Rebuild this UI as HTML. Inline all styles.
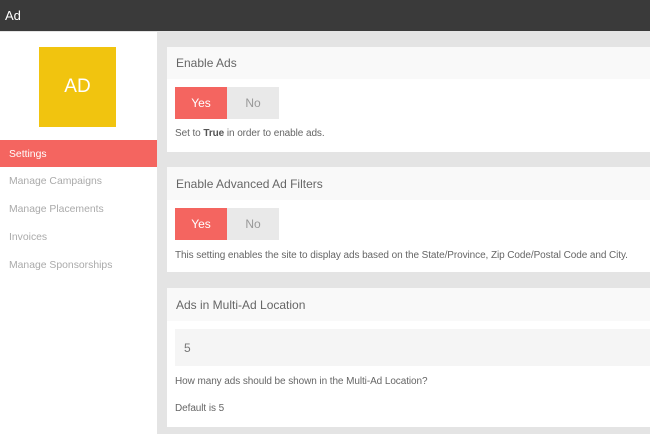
<!DOCTYPE html>
<html><head><style>
*{margin:0;padding:0;box-sizing:border-box}
body{width:650px;height:434px;overflow:hidden;background:#e4e4e4;font-family:"Liberation Sans",Arial,sans-serif;position:relative}
.top{position:absolute;left:0;top:0;width:650px;height:31px;background:#3a3a3a;color:#fff;font-size:13px;line-height:31px;padding-left:5px}
.side{position:absolute;left:0;top:32px;width:157px;height:402px;background:#fff}
.logo{position:absolute;left:39px;top:15px;width:77px;height:80px;background:#f1c40f;color:#fff;font-size:19px;text-align:center;line-height:80px}
.nav{position:absolute;left:0;width:157px;height:27px;line-height:29px;padding-left:9px;font-size:10.4px;color:#aaa}
.nav.act{background:#f46560;color:#fff}
.card{position:absolute;left:167px;width:483px;background:#fff}
.hd{height:32px;background:#f9f9f9;color:#666;font-size:12px;line-height:33px;padding-left:9px}
.btn{position:absolute;top:40px;width:52px;height:32px;line-height:33px;text-align:center;font-size:12px}
.y{left:8px;background:#f46560;color:#fff}
.n{left:60px;background:#e9e9e9;color:#999}
.t{position:absolute;left:8px;font-size:10px;color:#666;letter-spacing:-0.08px}
</style></head><body>
<div class="top">Ad</div>
<div class="side">
<div class="logo">AD</div>
<div class="nav act" style="top:108px">Settings</div>
<div class="nav" style="top:135px">Manage Campaigns</div>
<div class="nav" style="top:163px">Manage Placements</div>
<div class="nav" style="top:191px">Invoices</div>
<div class="nav" style="top:219px">Manage Sponsorships</div>
</div>
<div class="card" style="top:47px;height:105px">
<div class="hd">Enable Ads</div>
<div class="btn y">Yes</div><div class="btn n">No</div>
<div class="t" style="top:81px">Set to <b style="color:#555">True</b> in order to enable ads.</div>
</div>
<div class="card" style="top:167px;height:105px">
<div class="hd" style="height:33px;line-height:34px">Enable Advanced Ad Filters</div>
<div class="btn y" style="top:41px">Yes</div><div class="btn n" style="top:41px">No</div>
<div class="t" style="top:83px">This setting enables the site to display ads based on the State/Province, Zip Code/Postal Code and City.</div>
</div>
<div class="card" style="top:288px;height:139px">
<div class="hd" style="height:33px;line-height:34px">Ads in Multi-Ad Location</div>
<div style="position:absolute;left:8px;top:41px;width:475px;height:37px;background:#f5f5f5;color:#777;font-size:12px;line-height:38px;padding-left:9px">5</div>
<div class="t" style="top:88px">How many ads should be shown in the Multi-Ad Location?</div>
<div class="t" style="top:115px">Default is 5</div>
</div>
</body></html>
